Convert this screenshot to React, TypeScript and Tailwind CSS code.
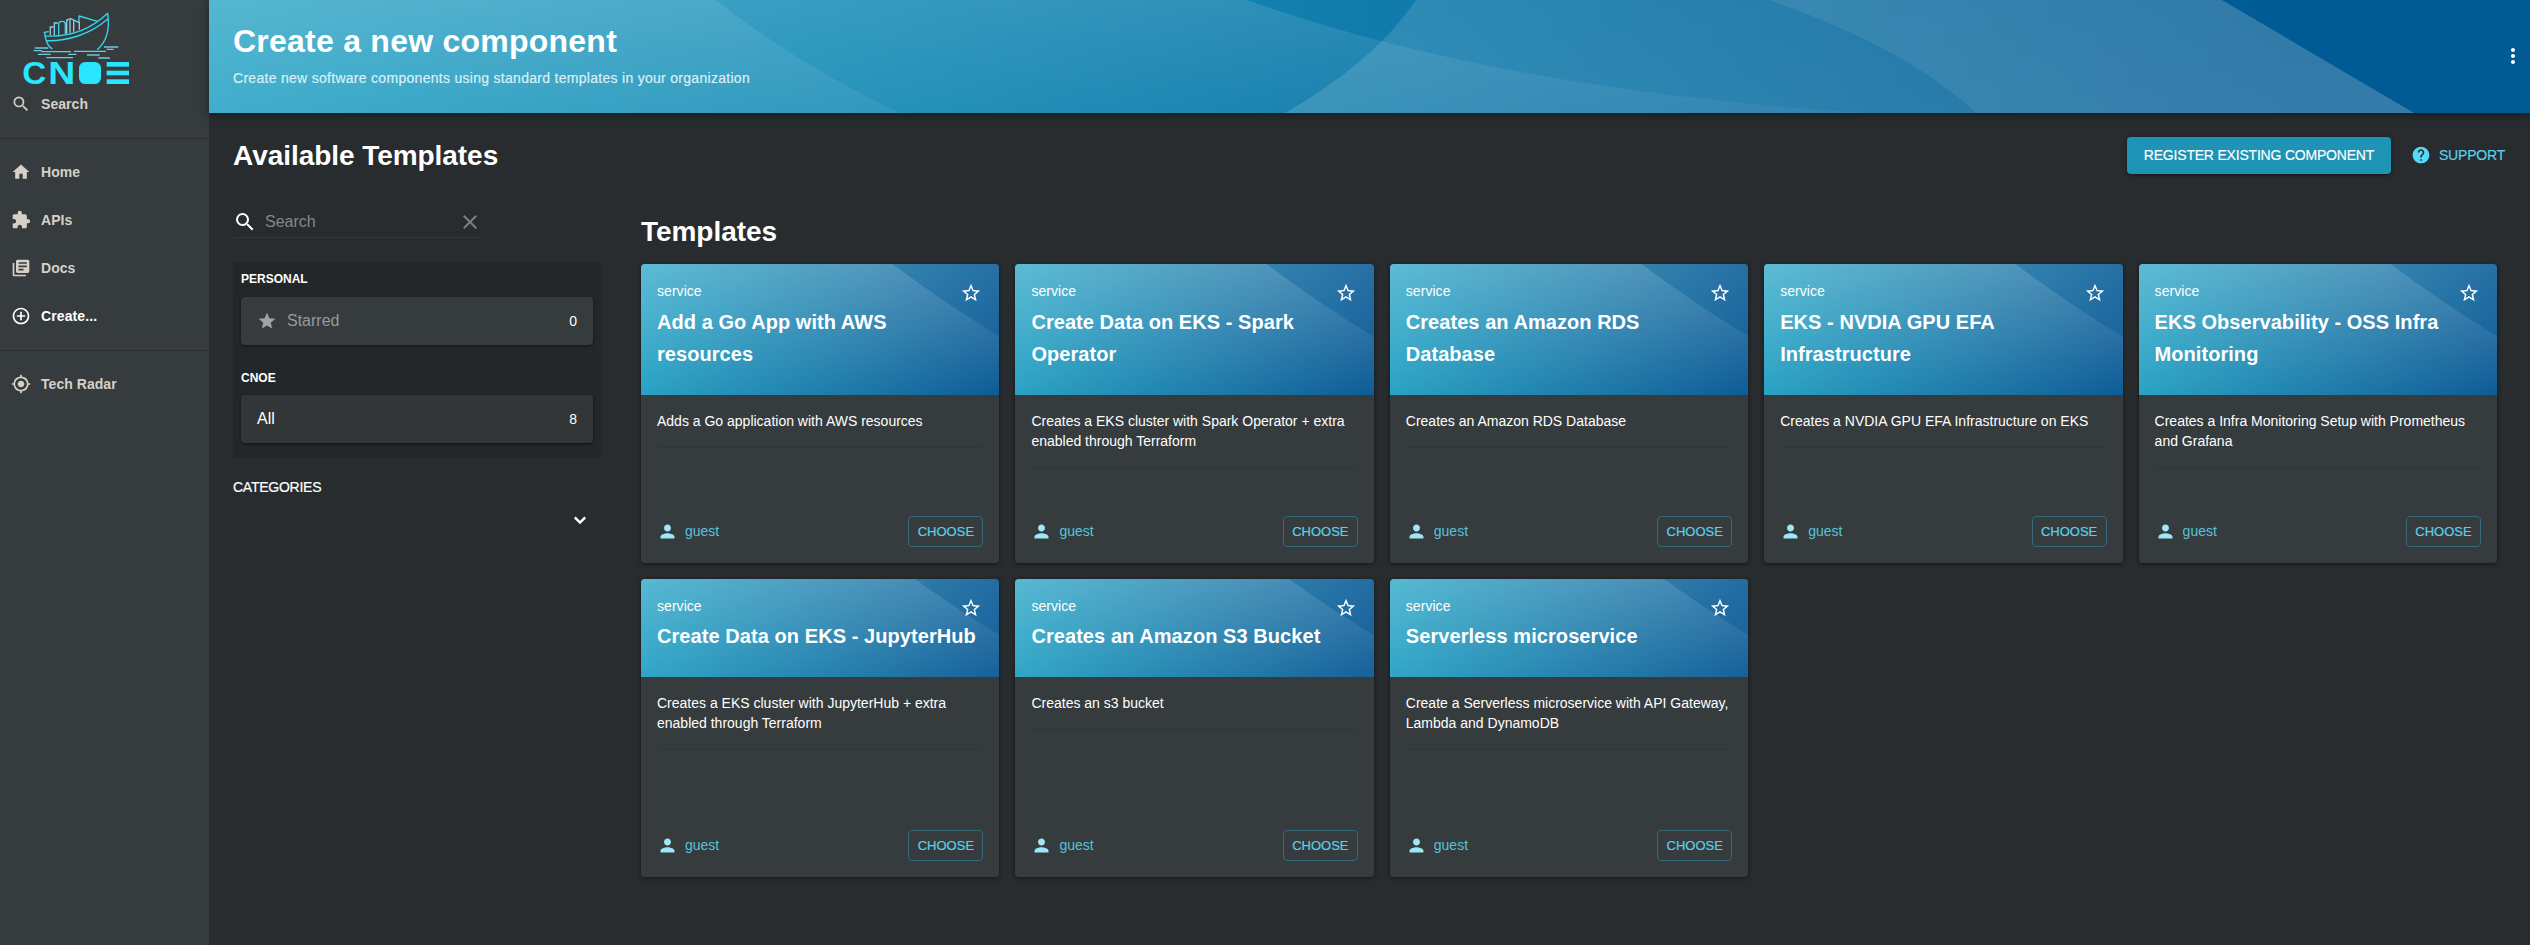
import React from "react";
import {
  MdClear,
  MdControlPoint,
  MdExtension,
  MdHelp,
  MdHome,
  MdLibraryBooks,
  MdMoreVert,
  MdMyLocation,
  MdPerson,
  MdSearch,
  MdStar,
  MdStarBorder,
} from "react-icons/md";
import type { IconType } from "react-icons";

type Template = { title: string; description: string };

const firstRow: Template[] = [
  { title: "Add a Go App with AWS resources", description: "Adds a Go application with AWS resources" },
  {
    title: "Create Data on EKS - Spark Operator",
    description: "Creates a EKS cluster with Spark Operator + extra enabled through Terraform",
  },
  { title: "Creates an Amazon RDS Database", description: "Creates an Amazon RDS Database" },
  { title: "EKS - NVDIA GPU EFA Infrastructure", description: "Creates a NVDIA GPU EFA Infrastructure on EKS" },
  {
    title: "EKS Observability - OSS Infra Monitoring",
    description: "Creates a Infra Monitoring Setup with Prometheus and Grafana",
  },
];

const secondRow: Template[] = [
  {
    title: "Create Data on EKS - JupyterHub",
    description: "Creates a EKS cluster with JupyterHub + extra enabled through Terraform",
  },
  { title: "Creates an Amazon S3 Bucket", description: "Creates an s3 bucket" },
  {
    title: "Serverless microservice",
    description: "Create a Serverless microservice with API Gateway, Lambda and DynamoDB",
  },
];

function Logo() {
  return (
    <svg className="block h-[90px] w-[130px]" viewBox="0 0 390 270" fill="none">
      <g stroke="#35d6ee" strokeWidth="4" strokeLinejoin="round" strokeLinecap="round">
        <path d="M133 97 L136 108 C200 112 268 92 323 40 C329 80 322 122 293 148" />
        <path d="M133 97 L145 95" />
        <path d="M135 108 L139 122 C200 124 270 104 322 58" />
        <path d="M139 122 C143 134 148 141 156 146" />
        <path d="M237 66 L237 48 L292 64" />
        <path d="M176 103 V70 Q178 64 186 64 Q196 64 196 72 V101" />
      </g>
      <g stroke="#8fcfe6" strokeWidth="4" strokeLinecap="round">
        <path d="M151 104 V81 H159" />
        <path d="M163 104 V69 H172" />
        <path d="M200 99 V60 L212 56 L238 68 V88" />
        <path d="M210 97 V60 M221 94 V62" />
      </g>
      <g stroke="#6cc9e0" strokeWidth="4">
        <path d="M104 144 H145 M101 152 H126 M124 155 H213 M114 163 H152 M205 163 H229 M139 173 H219" />
        <path d="M222 154 H318 M312 141 H355 M320 148 H341 M261 165 H299 M295 174 H330" />
      </g>
      <g fill="#29e5ff">
        <text x="67" y="251" fontFamily="Liberation Sans, Arial, sans-serif" fontWeight="700" fontSize="92" textLength="72" lengthAdjust="spacingAndGlyphs">
          C
        </text>
        <text x="145" y="252" fontFamily="Liberation Sans, Arial, sans-serif" fontWeight="700" fontSize="95" textLength="81" lengthAdjust="spacingAndGlyphs">
          N
        </text>
        <rect x="237" y="186" width="66" height="66" rx="19" />
        <rect x="320" y="186" width="67" height="14" />
        <rect x="320" y="212" width="67" height="14" />
        <rect x="320" y="238" width="67" height="14" />
      </g>
    </svg>
  );
}

function NavItem({ icon: Icon, label, active = false }: { icon: IconType; label: string; active?: boolean }) {
  return (
    <a
      className={
        active
          ? "flex h-12 items-center gap-2.5 pl-[11px] text-sm font-bold tracking-[0.1px] text-white"
          : "flex h-12 items-center gap-2.5 pl-[11px] text-sm font-bold tracking-[0.05px] text-[#d6d1c8]"
      }
    >
      <Icon className="size-5" />
      <span>{label}</span>
    </a>
  );
}

function Sidebar() {
  return (
    <aside className="flex w-[209px] shrink-0 flex-col bg-[#363b3d]">
      <Logo />
      <div className="-mt-[10px]">
        <NavItem icon={MdSearch} label="Search" />
      </div>
      <hr className="mt-[10px] mb-[9px] border-[#2b2f31]" />
      <NavItem icon={MdHome} label="Home" />
      <NavItem icon={MdExtension} label="APIs" />
      <NavItem icon={MdLibraryBooks} label="Docs" />
      <NavItem icon={MdControlPoint} label="Create..." active />
      <hr className="mt-[10px] mb-[9px] border-[#2b2f31]" />
      <NavItem icon={MdMyLocation} label="Tech Radar" />
    </aside>
  );
}

function HeaderWaves() {
  return (
    <svg className="absolute inset-0 size-full" viewBox="0 0 2321 113" preserveAspectRatio="none">
      <defs>
        <linearGradient id="hdr-left" x1="0" y1="0" x2="0" y2="1">
          <stop offset="0" stopColor="#fff" stopOpacity="0.09" />
          <stop offset="1" stopColor="#fff" stopOpacity="0.06" />
        </linearGradient>
        <linearGradient id="hdr-mid" x1="0" y1="0" x2="0" y2="1">
          <stop offset="0" stopColor="#fff" stopOpacity="0.12" />
          <stop offset="1" stopColor="#fff" stopOpacity="0.04" />
        </linearGradient>
        <linearGradient id="hdr-right" x1="0" y1="0" x2="0" y2="1">
          <stop offset="0" stopColor="#fff" stopOpacity="0.12" />
          <stop offset="1" stopColor="#fff" stopOpacity="0.14" />
        </linearGradient>
      </defs>
      <path d="M0 0 H506 Q595 68 691 113 H0 Z" fill="url(#hdr-left)" />
      <path d="M0 0 H1038 Q1290 90 1656 113 H0 Z" fill="url(#hdr-mid)" />
      <path d="M1207 0 H2013 L2205 113 H1076 Q1165 62 1207 0 Z" fill="url(#hdr-right)" />
      <path d="M1560 0 H2013 L2205 113 H1767 Q1700 49 1560 0 Z" fill="#fff" fillOpacity="0.08" />
    </svg>
  );
}

function Header() {
  return (
    <header className="relative z-10 flex h-[113px] shrink-0 items-start justify-between bg-[linear-gradient(90deg,#2ba5c6_0%,#0f7aab_52%,#005a94_90%,#005a94_100%)] pl-6 shadow-[0_2px_8px_rgba(10,20,20,0.6)]">
      <HeaderWaves />
      <div className="relative pt-[22px] text-white">
        <h1 className="text-[32px] leading-[38px] font-bold tracking-[0.24px]">Create a new component</h1>
        <p className="mt-2 text-sm leading-5 tracking-[0.29px] text-[#d9f0f7] [-webkit-text-stroke:0.2px]">
          Create new software components using standard templates in your organization
        </p>
      </div>
      <button className="relative mt-11 mr-[5px] text-white">
        <MdMoreVert className="size-6" />
      </button>
    </header>
  );
}

function Filters() {
  return (
    <section className="mt-8 w-[368px] shrink-0">
      <div className="flex h-8 w-[249px] items-center border-b border-[#34383a]">
        <MdSearch className="size-6 text-white" />
        <span className="ml-2 flex-1 text-base text-[#84888a]">Search</span>
        <MdClear className="size-6 text-[#7b7f81]" />
      </div>
      <div className="mt-6 rounded bg-[#232729] px-2 pt-2 pb-[15px] text-white">
        <h3 className="text-xs leading-[18px] font-bold">PERSONAL</h3>
        <div className="mt-[9px] flex h-12 items-center rounded bg-[#363b3d] px-4 shadow-[0_1px_3px_rgba(0,0,0,0.5)]">
          <MdStar className="size-5 text-[#a0a2a3]" />
          <span className="ml-2.5 flex-1 text-base text-[#96999b]">Starred</span>
          <span className="text-sm">0</span>
        </div>
        <h3 className="mt-6 text-xs leading-[18px] font-bold">CNOE</h3>
        <div className="mt-2 flex h-12 items-center rounded bg-[#323636] px-4 shadow-[0_1px_3px_rgba(0,0,0,0.5)]">
          <span className="flex-1 text-base">All</span>
          <span className="text-sm">8</span>
        </div>
      </div>
      <h3 className="mt-[19px] text-sm leading-5 tracking-[-0.25px] text-white [-webkit-text-stroke:0.2px]">
        CATEGORIES
      </h3>
      <div className="mt-[3px] flex h-10 items-center justify-end rounded border border-[#2b2f31] pr-2">
        <svg className="size-6" viewBox="0 0 24 24" fill="none" stroke="#fff" strokeWidth="2.4">
          <path d="M6.8 9.4 L12 14.6 L17.2 9.4" />
        </svg>
      </div>
    </section>
  );
}

function CardWave() {
  return (
    <svg className="absolute inset-0 size-full" viewBox="0 0 358 131" preserveAspectRatio="xMidYMid slice">
      <defs>
        <linearGradient id="card-wave" x1="0" y1="0" x2="0" y2="1">
          <stop offset="0" stopColor="#fff" stopOpacity="0.15" />
          <stop offset="1" stopColor="#fff" stopOpacity="0" />
        </linearGradient>
        <linearGradient id="card-sheen" x1="0" y1="0" x2="0" y2="1">
          <stop offset="0" stopColor="#fff" stopOpacity="0.11" />
          <stop offset="1" stopColor="#fff" stopOpacity="0.01" />
        </linearGradient>
      </defs>
      <rect width="359" height="131" fill="url(#card-sheen)" />
      <path d="M0 0 H251 Q306 41 359 73 V131 H0 Z" fill="url(#card-wave)" />
    </svg>
  );
}

function TemplateCard({ title, description, tall }: Template & { tall: boolean }) {
  return (
    <article
      className={
        tall
          ? "flex h-[299px] flex-col overflow-hidden rounded bg-[#363b3d] shadow-[0_1px_4px_rgba(0,0,0,0.5)]"
          : "flex h-[298px] flex-col overflow-hidden rounded bg-[#363b3d] shadow-[0_1px_4px_rgba(0,0,0,0.5)]"
      }
    >
      <div
        className={
          tall
            ? "relative h-[131px] shrink-0 bg-[linear-gradient(100deg,#29a6c7_0%,#1974a6_65%,#0b5a96_100%)] px-4 text-white"
            : "relative h-[98px] shrink-0 bg-[linear-gradient(100deg,#29a6c7_0%,#1974a6_65%,#0b5a96_100%)] px-4 text-white"
        }
      >
        <CardWave />
        <div className="relative flex h-[42px] items-end justify-between">
          <span className="mb-[5px] text-sm leading-5 tracking-[0.05px]">service</span>
          <MdStarBorder className="mr-px mb-[2px] size-[22px]" />
        </div>
        <h2 className={tall ? "relative text-xl leading-8 font-bold tracking-[0.05px]" : "relative -mt-px text-xl leading-8 font-bold tracking-[0.07px]"}>
          {title}
        </h2>
      </div>
      <div className="flex flex-1 flex-col p-4">
        <p className="text-sm leading-5 text-white">
          <span className="-mr-1 block">{description}</span>
        </p>
        <hr className="mt-4 border-[#323638]" />
        <div className="mt-auto flex items-center justify-between">
          <div className="flex items-center pb-px text-sm text-[#52c5dd]">
            <MdPerson className="size-[21px] text-[#9de7f8]" />
            <span className="ml-[7px]">guest</span>
          </div>
          <button className="flex h-[31px] w-[75px] items-center justify-center rounded border border-[#33697a] text-[13px] text-[#5bd0e8] [-webkit-text-stroke:0.2px]">
            CHOOSE
          </button>
        </div>
      </div>
    </article>
  );
}

export default function App() {
  return (
    <div className="flex h-[945px] w-full overflow-hidden bg-[#282c2e] font-['Liberation_Sans',Arial,sans-serif]">
      <Sidebar />
      <main className="flex min-w-0 flex-1 flex-col">
        <Header />
        <div className="flex flex-col pt-6 pr-[33px] pl-6">
          <div className="-mr-2 flex h-[37px] items-center justify-between">
            <h2 className="text-[28px] leading-[34px] font-bold tracking-[-0.05px] text-white">Available Templates</h2>
            <div className="flex items-center">
              <button className="h-[37px] w-[264px] rounded bg-[#1f93b5] pb-px text-sm tracking-[-0.2px] text-white shadow-[0_1px_4px_rgba(0,0,0,0.5)] [-webkit-text-stroke:0.15px]">
                REGISTER EXISTING COMPONENT
              </button>
              <button className="ml-5 flex items-center gap-2 pb-px text-sm tracking-[-0.2px] text-[#5bd0ea] [-webkit-text-stroke:0.2px]">
                <MdHelp className="size-5 text-[#54d9f9]" />
                SUPPORT
              </button>
            </div>
          </div>
          <div className="flex gap-10">
            <Filters />
            <section className="mt-[41px] min-w-0 flex-1">
              <h2 className="text-[28px] leading-[34px] font-bold tracking-[-0.05px] text-white">Templates</h2>
              <div className="mt-[15px] grid grid-cols-5 gap-4">
                {firstRow.map((t) => (
                  <TemplateCard key={t.title} {...t} tall />
                ))}
                {secondRow.map((t) => (
                  <TemplateCard key={t.title} {...t} tall={false} />
                ))}
              </div>
            </section>
          </div>
        </div>
      </main>
    </div>
  );
}
